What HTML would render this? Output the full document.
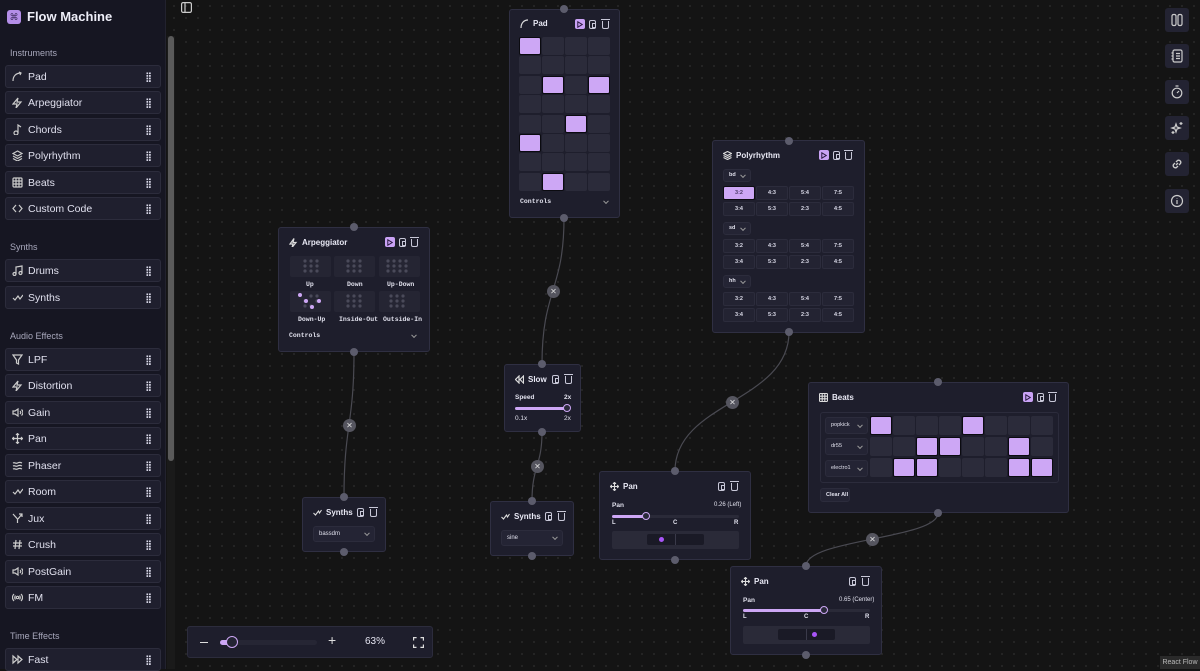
<!DOCTYPE html>
<html><head><meta charset="utf-8"><style>
*{box-sizing:border-box;margin:0;padding:0}
body{width:1200px;height:669px;overflow:hidden;background:#141414;font-family:"Liberation Sans",sans-serif;color:#e4e4f0;position:relative}
#canvas{position:absolute;left:0;top:0;width:1200px;height:669px;background-color:#141414;background-image:radial-gradient(circle,#2a2a2a 0.8px,transparent 1px);background-size:12px 12px}
.sb{position:absolute;left:0;top:0;width:166px;height:669px;background:#161622;border-right:1px solid #22222e}
.scroll{position:absolute;left:167px;top:36px;width:8px;height:633px;background:#1a1a1a}
.scroll i{position:absolute;left:1px;top:0;width:6px;height:425px;background:#5a5a5a;border-radius:3px}
.logo{position:absolute;left:7px;top:10px;width:14px;height:14px;border-radius:3px;background:#b48ee8;color:#3a2a5a;font-size:9px;text-align:center;line-height:14px}
.title{position:absolute;left:27px;top:9px;font-size:13px;font-weight:bold;color:#eeeef8}
.sec{position:absolute;left:10px;font-size:9px;color:#a8a8bc}
.it{position:absolute;left:5px;width:156px;height:23px;background:#1f1f2e;border:1px solid #2c2c3c;border-radius:3px;font-size:10.5px;color:#e0e0ee;line-height:22px;padding-left:22px}
.it svg{position:absolute;left:6px;top:5px}
.it::after{content:"";position:absolute;right:9px;top:6px;width:5px;height:10px;background-image:radial-gradient(circle,#d8d8e8 0.9px,transparent 1.1px);background-size:2.6px 2.6px}
.node{position:absolute;background:#1e1e2c;border:1px solid #2f2f42;border-radius:3px}
.h{position:absolute;width:8px;height:8px;border-radius:50%;background:#5c5c6c}
.nt{position:absolute;font-size:8px;font-weight:bold;color:#e8e8f4;white-space:nowrap}
.nt svg{vertical-align:-2px;margin-right:4px}
.ib{position:absolute;width:10px;height:10px;border-radius:2px}
.play{background:#c9a2f5}
.play svg{position:absolute;left:2px;top:1.5px}
.cp{border:1.2px solid #c8c8d8;border-radius:2px;width:7px;height:9px}
.cp::after{content:"";position:absolute;left:1.5px;top:2px;width:2px;height:3px;border:0.8px solid #c8c8d8}
.tr{border:1.2px solid #c8c8d8;border-top:none;border-radius:0 0 2px 2px;width:7px;height:8px}
.tr::before{content:"";position:absolute;left:-2px;top:-2px;width:9px;height:1.2px;background:#c8c8d8}
.c{position:absolute;background:#2b2b3a;border-radius:2px}
.on{background:#cda7f5;border:1px solid #0b0b10}
.sm{position:absolute;font-size:6.5px;color:#e0e0ec;font-family:"Liberation Mono",monospace;font-weight:bold}
.r{position:absolute;width:22px;height:14px;background:#232332;border:1px solid #2c2c3c;border-radius:2px;font-size:5.5px;font-weight:bold;color:#dcdcea;text-align:center;line-height:12px}
.ra{background:#cda7f5;border-color:#0d0d12;color:#4a3a66}
.sel{position:absolute;background:#242434;border:1px solid #2c2c3c;border-radius:3px;font-size:6px;color:#e0e0ec;padding-left:5px}
.chev{position:absolute;right:5px;top:50%;width:4px;height:4px;border-right:1px solid #999;border-bottom:1px solid #999;transform:translateY(-70%) rotate(45deg)}
.x{position:absolute;width:13px;height:13px;border-radius:50%;background:#55555f;color:#ddd;font-size:8px;text-align:center;line-height:13px}
.rb{position:absolute;left:1165px;width:24px;height:24px;background:#232332;border-radius:3px}
.rb svg{position:absolute;left:5px;top:5px}
</style></head><body>
<div id="canvas"></div>
<svg style="position:absolute;left:0;top:0" width="1200" height="669" fill="none" stroke="#4a4a52" stroke-width="1.2">
<path d="M564 218 C564 290 542 290 542 364"/>
<path d="M354 352 C354 425 344 425 344 497"/>
<path d="M542 432 C542 466 532 466 532 501"/>
<path d="M789 332 C789 402 675 402 675 471"/>
<path d="M938 513 C938 539 806 539 806 566"/>
</svg>
<div class="x" style="left:547px;top:285px">✕</div>
<div class="x" style="left:343px;top:419px">✕</div>
<div class="x" style="left:531px;top:460px">✕</div>
<div class="x" style="left:726px;top:396px">✕</div>
<div class="x" style="left:866px;top:533px">✕</div>

<!-- Sidebar -->
<div class="sb"></div>
<div class="scroll"><i></i></div>
<div class="logo">⌘</div><div class="title">Flow Machine</div>
<svg style="position:absolute;left:181px;top:2px" width="11" height="11" fill="none" stroke="#ccc" stroke-width="1.2"><rect x="0.6" y="0.6" width="9.8" height="9.8" rx="1.5"/><path d="M4 1v9"/></svg>
<div class="sec" style="top:48px">Instruments</div>
<div class="it" style="top:65px"><svg width="11" height="11" fill="none" stroke="#ccc" stroke-width="1.2"><path d="M1 10C1 5 4 2 9 2M7 1l2 1-1 2"/></svg>Pad</div>
<div class="it" style="top:91px"><svg width="11" height="11" fill="none" stroke="#ccc" stroke-width="1.2"><path d="M6 1L1 7h4l-1 4 5-6H5z"/></svg>Arpeggiator</div>
<div class="it" style="top:118px"><svg width="11" height="11" fill="none" stroke="#ccc" stroke-width="1.2"><circle cx="4" cy="9" r="2"/><path d="M6 9V1l3 2"/></svg>Chords</div>
<div class="it" style="top:144px"><svg width="11" height="11" fill="none" stroke="#ccc" stroke-width="1.2"><path d="M5.5 1L10 3.5 5.5 6 1 3.5zM1 6l4.5 2.5L10 6M1 8.5L5.5 11 10 8.5"/></svg>Polyrhythm</div>
<div class="it" style="top:171px"><svg width="11" height="11" fill="none" stroke="#ccc" stroke-width="1.2"><rect x="1" y="1" width="9" height="9" rx="1"/><path d="M4 1v9M7 1v9M1 4h9M1 7h9"/></svg>Beats</div>
<div class="it" style="top:197px"><svg width="11" height="11" fill="none" stroke="#ccc" stroke-width="1.2"><path d="M4 2L1 5.5 4 9M7 2l3 3.5L7 9"/></svg>Custom Code</div>
<div class="sec" style="top:242px">Synths</div>
<div class="it" style="top:259px"><svg width="11" height="11" fill="none" stroke="#ccc" stroke-width="1.2"><circle cx="2.5" cy="9" r="1.5"/><circle cx="8.5" cy="8" r="1.5"/><path d="M4 9V2l6-1v7"/></svg>Drums</div>
<div class="it" style="top:286px"><svg width="11" height="11" fill="none" stroke="#ccc" stroke-width="1.2"><path d="M1 6l2 2 3-4 2 3 3-4"/></svg>Synths</div>
<div class="sec" style="top:331px">Audio Effects</div>
<div class="it" style="top:348px"><svg width="11" height="11" fill="none" stroke="#ccc" stroke-width="1.2"><path d="M1 1h9L6.5 6v4l-2-1V6z"/></svg>LPF</div>
<div class="it" style="top:374px"><svg width="11" height="11" fill="none" stroke="#ccc" stroke-width="1.2"><path d="M6 1L1 7h4l-1 4 5-6H5z"/></svg>Distortion</div>
<div class="it" style="top:401px"><svg width="11" height="11" fill="none" stroke="#ccc" stroke-width="1.2"><path d="M1 4h2l3-2v7L3 7H1zM8 4c1 1 1 2 0 3M9.5 2.5c2 2 2 4 0 6"/></svg>Gain</div>
<div class="it" style="top:427px"><svg width="11" height="11" fill="none" stroke="#ccc" stroke-width="1.2"><path d="M5.5 0.5v10M0.5 5.5h10M4 2l1.5-1.5L7 2M4 9l1.5 1.5L7 9M2 4L0.5 5.5 2 7M9 4l1.5 1.5L9 7"/></svg>Pan</div>
<div class="it" style="top:454px"><svg width="11" height="11" fill="none" stroke="#ccc" stroke-width="1.2"><path d="M1 3c2-1 3 1 4.5 0S8 2 10 3M1 6c2-1 3 1 4.5 0S8 5 10 6M1 9c2-1 3 1 4.5 0S8 8 10 9"/></svg>Phaser</div>
<div class="it" style="top:480px"><svg width="11" height="11" fill="none" stroke="#ccc" stroke-width="1.2"><path d="M1 6l2 2 3-4 2 3 3-4"/></svg>Room</div>
<div class="it" style="top:507px"><svg width="11" height="11" fill="none" stroke="#ccc" stroke-width="1.2"><path d="M5.5 10V6L1 1M6 6l4-5M7 1h3v3"/></svg>Jux</div>
<div class="it" style="top:533px"><svg width="11" height="11" fill="none" stroke="#ccc" stroke-width="1.2"><path d="M4 1L3 10M8 1L7 10M1 4h9M1 7h9"/></svg>Crush</div>
<div class="it" style="top:560px"><svg width="11" height="11" fill="none" stroke="#ccc" stroke-width="1.2"><path d="M1 4h2l3-2v7L3 7H1zM8 4c1 1 1 2 0 3M9.5 2.5c2 2 2 4 0 6"/></svg>PostGain</div>
<div class="it" style="top:586px"><svg width="11" height="11" fill="none" stroke="#ccc" stroke-width="1.2"><circle cx="5.5" cy="5.5" r="1.2"/><path d="M3.5 3.5c-1 1-1 3 0 4M7.5 3.5c1 1 1 3 0 4M2 2c-2 2-2 5 0 7M9 2c2 2 2 5 0 7"/></svg>FM</div>
<div class="sec" style="top:631px">Time Effects</div>
<div class="it" style="top:648px"><svg width="11" height="11" fill="none" stroke="#ccc" stroke-width="1.2"><path d="M1 2l4 3.5L1 9zM6 2l4 3.5L6 9z"/></svg>Fast</div>

<!-- Pad node -->
<div class="node" style="left:509px;top:9px;width:111px;height:209px">
<div class="nt" style="left:10px;top:9px"><svg width="9" height="9" fill="none" stroke="#ddd" stroke-width="1.2"><path d="M1 9C1 4 4 1 8 1"/></svg>Pad</div>
<div class="ib play" style="left:65px;top:9px"><svg width="6" height="7" fill="none" stroke="#2a1a40" stroke-width="1"><path d="M0.8 0.8L5.2 3.5 0.8 6.2z"/></svg></div><div class="ib cp" style="left:79px;top:10px"></div><div class="ib tr" style="left:92px;top:11px"></div>
<div class="sm" style="left:10px;top:188px">Controls</div><div class="chev" style="left:94px;top:192px"></div>
</div>
<div style="position:absolute;left:519px;top:37px;width:91px;height:155px">
<div class="c on" style="left:0;top:0;width:22px;height:18px"></div><div class="c" style="left:23px;top:0;width:22px;height:18px"></div><div class="c" style="left:46px;top:0;width:22px;height:18px"></div><div class="c" style="left:69px;top:0;width:22px;height:18px"></div>
<div class="c" style="left:0;top:19.4px;width:22px;height:18px"></div><div class="c" style="left:23px;top:19.4px;width:22px;height:18px"></div><div class="c" style="left:46px;top:19.4px;width:22px;height:18px"></div><div class="c" style="left:69px;top:19.4px;width:22px;height:18px"></div>
<div class="c" style="left:0;top:38.8px;width:22px;height:18px"></div><div class="c on" style="left:23px;top:38.8px;width:22px;height:18px"></div><div class="c" style="left:46px;top:38.8px;width:22px;height:18px"></div><div class="c on" style="left:69px;top:38.8px;width:22px;height:18px"></div>
<div class="c" style="left:0;top:58.2px;width:22px;height:18px"></div><div class="c" style="left:23px;top:58.2px;width:22px;height:18px"></div><div class="c" style="left:46px;top:58.2px;width:22px;height:18px"></div><div class="c" style="left:69px;top:58.2px;width:22px;height:18px"></div>
<div class="c" style="left:0;top:77.6px;width:22px;height:18px"></div><div class="c" style="left:23px;top:77.6px;width:22px;height:18px"></div><div class="c on" style="left:46px;top:77.6px;width:22px;height:18px"></div><div class="c" style="left:69px;top:77.6px;width:22px;height:18px"></div>
<div class="c on" style="left:0;top:97px;width:22px;height:18px"></div><div class="c" style="left:23px;top:97px;width:22px;height:18px"></div><div class="c" style="left:46px;top:97px;width:22px;height:18px"></div><div class="c" style="left:69px;top:97px;width:22px;height:18px"></div>
<div class="c" style="left:0;top:116.4px;width:22px;height:18px"></div><div class="c" style="left:23px;top:116.4px;width:22px;height:18px"></div><div class="c" style="left:46px;top:116.4px;width:22px;height:18px"></div><div class="c" style="left:69px;top:116.4px;width:22px;height:18px"></div>
<div class="c" style="left:0;top:135.8px;width:22px;height:18px"></div><div class="c on" style="left:23px;top:135.8px;width:22px;height:18px"></div><div class="c" style="left:46px;top:135.8px;width:22px;height:18px"></div><div class="c" style="left:69px;top:135.8px;width:22px;height:18px"></div>
</div>
<div class="h" style="left:560px;top:5px"></div><div class="h" style="left:560px;top:214px"></div>

<!-- Arpeggiator -->
<div class="node" style="left:278px;top:227px;width:152px;height:125px">
<div class="nt" style="left:10px;top:10px"><svg width="9" height="9" fill="none" stroke="#ddd" stroke-width="1.2"><path d="M5 0.5L1 6h3l-1 3.5 4-5H4z"/></svg>Arpeggiator</div>
<div class="ib play" style="left:106px;top:9px"><svg width="6" height="7" fill="none" stroke="#2a1a40" stroke-width="1"><path d="M0.8 0.8L5.2 3.5 0.8 6.2z"/></svg></div><div class="ib cp" style="left:120px;top:10px"></div><div class="ib tr" style="left:132px;top:11px"></div>
<div class="c" style="left:11px;top:28px;width:41px;height:21px;background:#252533"></div>
<div class="c" style="left:55px;top:28px;width:41px;height:21px;background:#252533"></div>
<div class="c" style="left:100px;top:28px;width:41px;height:21px;background:#252533"></div>
<div class="c" style="left:11px;top:63px;width:41px;height:21px;background:#252533"></div>
<div class="c" style="left:55px;top:63px;width:41px;height:21px;background:#252533"></div>
<div class="c" style="left:100px;top:63px;width:41px;height:21px;background:#252533"></div>
<div class="sm" style="left:27px;top:53px">Up</div><div class="sm" style="left:68px;top:53px">Down</div><div class="sm" style="left:108px;top:53px">Up-Down</div>
<div class="sm" style="left:19px;top:88px">Down-Up</div><div class="sm" style="left:60px;top:88px">Inside-Out</div><div class="sm" style="left:104px;top:88px">Outside-In</div>
<div class="sm" style="left:10px;top:104px">Controls</div><div class="chev" style="left:133px;top:108px"></div>
</div>
<svg style="position:absolute;left:278px;top:227px" width="152" height="100">
<g fill="#4a4a5a"><circle cx="27" cy="34" r="1.6"/><circle cx="33" cy="34" r="1.6"/><circle cx="39" cy="34" r="1.6"/><circle cx="27" cy="39" r="1.6"/><circle cx="33" cy="39" r="1.6"/><circle cx="39" cy="39" r="1.6"/><circle cx="27" cy="44" r="1.6"/><circle cx="33" cy="44" r="1.6"/><circle cx="39" cy="44" r="1.6"/>
<circle cx="70" cy="34" r="1.6"/><circle cx="76" cy="34" r="1.6"/><circle cx="82" cy="34" r="1.6"/><circle cx="70" cy="39" r="1.6"/><circle cx="76" cy="39" r="1.6"/><circle cx="82" cy="39" r="1.6"/><circle cx="70" cy="44" r="1.6"/><circle cx="76" cy="44" r="1.6"/><circle cx="82" cy="44" r="1.6"/>
<circle cx="110" cy="34" r="1.6"/><circle cx="116" cy="34" r="1.6"/><circle cx="122" cy="34" r="1.6"/><circle cx="128" cy="34" r="1.6"/><circle cx="110" cy="39" r="1.6"/><circle cx="116" cy="39" r="1.6"/><circle cx="122" cy="39" r="1.6"/><circle cx="128" cy="39" r="1.6"/><circle cx="110" cy="44" r="1.6"/><circle cx="116" cy="44" r="1.6"/><circle cx="122" cy="44" r="1.6"/><circle cx="128" cy="44" r="1.6"/>
<circle cx="70" cy="69" r="1.6"/><circle cx="76" cy="69" r="1.6"/><circle cx="82" cy="69" r="1.6"/><circle cx="70" cy="74" r="1.6"/><circle cx="76" cy="74" r="1.6"/><circle cx="82" cy="74" r="1.6"/><circle cx="70" cy="79" r="1.6"/><circle cx="76" cy="79" r="1.6"/><circle cx="82" cy="79" r="1.6"/>
<circle cx="113" cy="69" r="1.6"/><circle cx="119" cy="69" r="1.6"/><circle cx="125" cy="69" r="1.6"/><circle cx="113" cy="74" r="1.6"/><circle cx="119" cy="74" r="1.6"/><circle cx="125" cy="74" r="1.6"/><circle cx="113" cy="79" r="1.6"/><circle cx="119" cy="79" r="1.6"/><circle cx="125" cy="79" r="1.6"/>
<circle cx="27" cy="74" r="1.6"/><circle cx="39" cy="74" r="1.6"/><circle cx="27" cy="79" r="1.6"/><circle cx="33" cy="79" r="1.6"/><circle cx="39" cy="69" r="1.6"/><circle cx="33" cy="69" r="1.6"/></g>
<g fill="#cda7f5"><circle cx="22" cy="68" r="2"/><circle cx="28" cy="74" r="2"/><circle cx="34" cy="80" r="2"/><circle cx="41" cy="74" r="2"/></g>
</svg>
<div class="h" style="left:350px;top:223px"></div><div class="h" style="left:350px;top:348px"></div>

<!-- Slow -->
<div class="node" style="left:504px;top:364px;width:77px;height:68px">
<div class="nt" style="left:10px;top:10px"><svg width="9" height="9" fill="none" stroke="#ddd" stroke-width="1.2"><path d="M4 1L0.5 4.5 4 8zM8.5 1L5 4.5 8.5 8z"/></svg>Slow</div>
<div class="ib cp" style="left:47px;top:10px"></div><div class="ib tr" style="left:60px;top:11px"></div>
<div class="sm" style="left:10px;top:29px;font-family:'Liberation Sans';font-size:6.5px">Speed</div><div class="sm" style="left:59px;top:29px;font-family:'Liberation Sans'">2x</div>
<div style="position:absolute;left:10px;top:42px;width:52px;height:3px;background:#cda7f5;border-radius:2px"></div>
<div style="position:absolute;left:58px;top:39px;width:8px;height:8px;border-radius:50%;background:#2a2a3a;border:1.5px solid #cda7f5"></div>
<div class="sm" style="left:10px;top:50px;font-family:'Liberation Sans';font-weight:normal">0.1x</div><div class="sm" style="left:59px;top:50px;font-family:'Liberation Sans';font-weight:normal">2x</div>
</div>
<div class="h" style="left:538px;top:360px"></div><div class="h" style="left:538px;top:428px"></div>

<!-- Synths1 -->
<div class="node" style="left:302px;top:497px;width:84px;height:55px">
<div class="nt" style="left:10px;top:10px"><svg width="9" height="9" fill="none" stroke="#ddd" stroke-width="1.1"><path d="M0.5 5l2 2 3-4 1 2 2-3"/></svg>Synths</div>
<div class="ib cp" style="left:54px;top:10px"></div><div class="ib tr" style="left:67px;top:11px"></div>
<div class="sel" style="left:10px;top:28px;width:62px;height:16px;line-height:14px">bassdm<span class="chev"></span></div>
</div>
<div class="h" style="left:340px;top:493px"></div><div class="h" style="left:340px;top:548px"></div>

<!-- Synths2 -->
<div class="node" style="left:490px;top:501px;width:84px;height:55px">
<div class="nt" style="left:10px;top:10px"><svg width="9" height="9" fill="none" stroke="#ddd" stroke-width="1.1"><path d="M0.5 5l2 2 3-4 1 2 2-3"/></svg>Synths</div>
<div class="ib cp" style="left:54px;top:10px"></div><div class="ib tr" style="left:67px;top:11px"></div>
<div class="sel" style="left:10px;top:28px;width:62px;height:16px;line-height:14px">sine<span class="chev"></span></div>
</div>
<div class="h" style="left:528px;top:497px"></div><div class="h" style="left:528px;top:552px"></div>

<!-- Polyrhythm -->
<div class="node" style="left:712px;top:140px;width:153px;height:193px">
<div class="nt" style="left:10px;top:10px"><svg width="9" height="9" fill="none" stroke="#ddd" stroke-width="1.1"><path d="M4.5 0.5L8.5 2.5 4.5 4.5 0.5 2.5zM0.5 4.5l4 2 4-2M0.5 6.5l4 2 4-2"/></svg>Polyrhythm</div>
<div class="ib play" style="left:106px;top:9px"><svg width="6" height="7" fill="none" stroke="#2a1a40" stroke-width="1"><path d="M0.8 0.8L5.2 3.5 0.8 6.2z"/></svg></div><div class="ib cp" style="left:120px;top:10px"></div><div class="ib tr" style="left:132px;top:11px"></div>
<div class="sel" style="left:10px;top:28px;width:28px;height:13px;line-height:11px;font-size:5.5px;font-weight:bold">bd<span class="chev"></span></div>
<div class="sel" style="left:10px;top:81px;width:28px;height:13px;line-height:11px;font-size:5.5px;font-weight:bold">sd<span class="chev"></span></div>
<div class="sel" style="left:10px;top:134px;width:28px;height:13px;line-height:11px;font-size:5.5px;font-weight:bold">hh<span class="chev"></span></div>
</div>
<div style="position:absolute;left:723px;top:186px">
<div class="r ra" style="left:0;top:0;width:32px">3:2</div><div class="r" style="left:33px;top:0;width:32px">4:3</div><div class="r" style="left:66px;top:0;width:32px">5:4</div><div class="r" style="left:99px;top:0;width:32px">7:5</div>
<div class="r" style="left:0;top:16px;width:32px">3:4</div><div class="r" style="left:33px;top:16px;width:32px">5:3</div><div class="r" style="left:66px;top:16px;width:32px">2:3</div><div class="r" style="left:99px;top:16px;width:32px">4:5</div>
<div class="r" style="left:0;top:53px;width:32px">3:2</div><div class="r" style="left:33px;top:53px;width:32px">4:3</div><div class="r" style="left:66px;top:53px;width:32px">5:4</div><div class="r" style="left:99px;top:53px;width:32px">7:5</div>
<div class="r" style="left:0;top:69px;width:32px">3:4</div><div class="r" style="left:33px;top:69px;width:32px">5:3</div><div class="r" style="left:66px;top:69px;width:32px">2:3</div><div class="r" style="left:99px;top:69px;width:32px">4:5</div>
<div class="r" style="left:0;top:106px;width:32px">3:2</div><div class="r" style="left:33px;top:106px;width:32px">4:3</div><div class="r" style="left:66px;top:106px;width:32px">5:4</div><div class="r" style="left:99px;top:106px;width:32px">7:5</div>
<div class="r" style="left:0;top:122px;width:32px">3:4</div><div class="r" style="left:33px;top:122px;width:32px">5:3</div><div class="r" style="left:66px;top:122px;width:32px">2:3</div><div class="r" style="left:99px;top:122px;width:32px">4:5</div>
</div>
<div class="h" style="left:785px;top:137px"></div><div class="h" style="left:785px;top:328px"></div>

<!-- Beats -->
<div class="node" style="left:808px;top:382px;width:261px;height:131px">
<div class="nt" style="left:10px;top:10px"><svg width="9" height="9" fill="none" stroke="#ddd" stroke-width="1.1"><rect x="0.5" y="0.5" width="8" height="8" rx="1"/><path d="M3.2 0.5v8M5.8 0.5v8M0.5 3.2h8M0.5 5.8h8"/></svg>Beats</div>
<div class="ib play" style="left:214px;top:9px"><svg width="6" height="7" fill="none" stroke="#2a1a40" stroke-width="1"><path d="M0.8 0.8L5.2 3.5 0.8 6.2z"/></svg></div><div class="ib cp" style="left:228px;top:10px"></div><div class="ib tr" style="left:240px;top:11px"></div>
<div style="position:absolute;left:11px;top:29px;width:239px;height:71px;border:1px solid #2c2c3c;border-radius:3px"></div>
<div class="sel" style="left:16px;top:34px;width:43px;height:17px;line-height:15px;font-size:5.5px">popkick<span class="chev"></span></div>
<div class="sel" style="left:16px;top:55px;width:43px;height:17px;line-height:15px;font-size:5.5px">dr55<span class="chev"></span></div>
<div class="sel" style="left:16px;top:77px;width:43px;height:17px;line-height:15px;font-size:5.5px">electro1<span class="chev"></span></div>
<div class="sel" style="left:11px;top:105px;width:30px;height:14px;line-height:12px;font-size:5.5px;font-weight:bold">Clear All</div>
</div>
<div style="position:absolute;left:870px;top:416px">
<div class="c on" style="left:0;top:0;width:22px;height:19px"></div><div class="c" style="left:23px;top:0;width:22px;height:19px"></div><div class="c" style="left:46px;top:0;width:22px;height:19px"></div><div class="c" style="left:69px;top:0;width:22px;height:19px"></div><div class="c on" style="left:92px;top:0;width:22px;height:19px"></div><div class="c" style="left:115px;top:0;width:22px;height:19px"></div><div class="c" style="left:138px;top:0;width:22px;height:19px"></div><div class="c" style="left:161px;top:0;width:22px;height:19px"></div>
<div class="c" style="left:0;top:21px;width:22px;height:19px"></div><div class="c" style="left:23px;top:21px;width:22px;height:19px"></div><div class="c on" style="left:46px;top:21px;width:22px;height:19px"></div><div class="c on" style="left:69px;top:21px;width:22px;height:19px"></div><div class="c" style="left:92px;top:21px;width:22px;height:19px"></div><div class="c" style="left:115px;top:21px;width:22px;height:19px"></div><div class="c on" style="left:138px;top:21px;width:22px;height:19px"></div><div class="c" style="left:161px;top:21px;width:22px;height:19px"></div>
<div class="c" style="left:0;top:42px;width:22px;height:19px"></div><div class="c on" style="left:23px;top:42px;width:22px;height:19px"></div><div class="c on" style="left:46px;top:42px;width:22px;height:19px"></div><div class="c" style="left:69px;top:42px;width:22px;height:19px"></div><div class="c" style="left:92px;top:42px;width:22px;height:19px"></div><div class="c" style="left:115px;top:42px;width:22px;height:19px"></div><div class="c on" style="left:138px;top:42px;width:22px;height:19px"></div><div class="c on" style="left:161px;top:42px;width:22px;height:19px"></div>
</div>
<div class="h" style="left:934px;top:378px"></div><div class="h" style="left:934px;top:509px"></div>

<!-- Pan1 -->
<div class="node" style="left:599px;top:471px;width:152px;height:89px">
<div class="nt" style="left:10px;top:10px"><svg width="9" height="9" fill="none" stroke="#ddd" stroke-width="1.1"><path d="M4.5 0.5v8M0.5 4.5h8M3 1.8l1.5-1.3L6 1.8M3 7.2l1.5 1.3L6 7.2M1.8 3L0.5 4.5 1.8 6M7.2 3l1.3 1.5L7.2 6"/></svg>Pan</div>
<div class="ib cp" style="left:118px;top:10px"></div><div class="ib tr" style="left:131px;top:11px"></div>
<div class="sm" style="left:12px;top:30px;font-family:'Liberation Sans';font-size:6.5px">Pan</div><div class="sm" style="left:114px;top:30px;font-family:'Liberation Sans';font-weight:normal;font-size:6px">0.26 (Left)</div>
<div style="position:absolute;left:12px;top:43px;width:127px;height:3px;background:#2a2a38;border-radius:2px"></div>
<div style="position:absolute;left:12px;top:43px;width:34px;height:3px;background:#cda7f5;border-radius:2px"></div>
<div style="position:absolute;left:42px;top:40px;width:8px;height:8px;border-radius:50%;background:#2a2a3a;border:1.5px solid #cda7f5"></div>
<div class="sm" style="left:12px;top:48px;font-family:'Liberation Sans';font-size:6px">L</div><div class="sm" style="left:73px;top:48px;font-family:'Liberation Sans';font-size:6px">C</div><div class="sm" style="left:134px;top:48px;font-family:'Liberation Sans';font-size:6px">R</div>
<div style="position:absolute;left:12px;top:59px;width:127px;height:18px;background:#2a2a38;border-radius:2px"></div>
<div style="position:absolute;left:47px;top:62px;width:57px;height:11px;background:#1a1a26;border-radius:2px"></div>
<div style="position:absolute;left:75px;top:62px;width:1px;height:11px;background:#3a3a4a"></div>
<div style="position:absolute;left:59px;top:65px;width:5px;height:5px;border-radius:50%;background:#a855f7"></div>
</div>
<div class="h" style="left:671px;top:467px"></div><div class="h" style="left:671px;top:556px"></div>

<!-- Pan2 -->
<div class="node" style="left:730px;top:566px;width:152px;height:89px">
<div class="nt" style="left:10px;top:10px"><svg width="9" height="9" fill="none" stroke="#ddd" stroke-width="1.1"><path d="M4.5 0.5v8M0.5 4.5h8M3 1.8l1.5-1.3L6 1.8M3 7.2l1.5 1.3L6 7.2M1.8 3L0.5 4.5 1.8 6M7.2 3l1.3 1.5L7.2 6"/></svg>Pan</div>
<div class="ib cp" style="left:118px;top:10px"></div><div class="ib tr" style="left:131px;top:11px"></div>
<div class="sm" style="left:12px;top:30px;font-family:'Liberation Sans';font-size:6.5px">Pan</div><div class="sm" style="left:108px;top:30px;font-family:'Liberation Sans';font-weight:normal;font-size:6px">0.65 (Center)</div>
<div style="position:absolute;left:12px;top:42px;width:127px;height:3px;background:#2a2a38;border-radius:2px"></div>
<div style="position:absolute;left:12px;top:42px;width:82px;height:3px;background:#cda7f5;border-radius:2px"></div>
<div style="position:absolute;left:89px;top:39px;width:8px;height:8px;border-radius:50%;background:#2a2a3a;border:1.5px solid #cda7f5"></div>
<div class="sm" style="left:12px;top:47px;font-family:'Liberation Sans';font-size:6px">L</div><div class="sm" style="left:73px;top:47px;font-family:'Liberation Sans';font-size:6px">C</div><div class="sm" style="left:134px;top:47px;font-family:'Liberation Sans';font-size:6px">R</div>
<div style="position:absolute;left:12px;top:59px;width:127px;height:18px;background:#2a2a38;border-radius:2px"></div>
<div style="position:absolute;left:47px;top:62px;width:57px;height:11px;background:#1a1a26;border-radius:2px"></div>
<div style="position:absolute;left:75px;top:62px;width:1px;height:11px;background:#3a3a4a"></div>
<div style="position:absolute;left:81px;top:65px;width:5px;height:5px;border-radius:50%;background:#a855f7"></div>
</div>
<div class="h" style="left:802px;top:562px"></div><div class="h" style="left:802px;top:651px"></div>

<!-- Zoom control -->
<div class="node" style="left:187px;top:626px;width:246px;height:32px;border-color:#2c2c3c">
<div style="position:absolute;left:12px;top:15px;width:8px;height:1.3px;background:#ddd"></div>
<div style="position:absolute;left:32px;top:13px;width:97px;height:5px;background:#262634;border-radius:3px"></div>
<div style="position:absolute;left:32px;top:13px;width:12px;height:5px;background:#cda7f5;border-radius:3px"></div>
<div style="position:absolute;left:38px;top:9px;width:12px;height:12px;border-radius:50%;background:#242434;border:1.5px solid #cda7f5"></div>
<div style="position:absolute;left:140px;top:5px;font-size:14px;color:#ddd">+</div>
<div style="position:absolute;left:177px;top:9px;font-size:10px;color:#e4e4f0">63%</div>
<svg style="position:absolute;left:225px;top:10px" width="11" height="11" fill="none" stroke="#ddd" stroke-width="1.2"><path d="M0.6 3.5V0.6h3M7.5 0.6h2.9v3M10.4 7.5v2.9h-3M3.5 10.4H0.6V7.5"/></svg>
</div>

<!-- Right buttons -->
<div class="rb" style="top:8px"><svg width="14" height="14" fill="none" stroke="#ccc" stroke-width="1.2"><rect x="2" y="1.5" width="4" height="11" rx="1.5"/><rect x="8" y="1.5" width="4" height="11" rx="1.5"/></svg></div>
<div class="rb" style="top:44px"><svg width="14" height="14" fill="none" stroke="#ccc" stroke-width="1.2"><rect x="3" y="1" width="9" height="12" rx="1.5"/><path d="M1.5 4h2M1.5 7h2M1.5 10h2M6 4.5h4M6 7h4M6 9.5h4"/></svg></div>
<div class="rb" style="top:80px"><svg width="14" height="14" fill="none" stroke="#ccc" stroke-width="1.2"><circle cx="7" cy="8" r="4.8"/><path d="M5.5 1h3M7 8l2-2"/></svg></div>
<div class="rb" style="top:116px"><svg width="14" height="14" fill="none" stroke="#ccc" stroke-width="1.2"><path d="M6 3l1 3 3 1-3 1-1 3-1-3-3-1 3-1zM11 1v3M9.5 2.5h3M3 10v3M1.5 11.5h3"/></svg></div>
<div class="rb" style="top:152px"><svg width="14" height="14" fill="none" stroke="#ccc" stroke-width="1.3"><path d="M6 8l2-2M5 6L3.5 7.5a2.2 2.2 0 003 3L8 9M9 8l1.5-1.5a2.2 2.2 0 00-3-3L6 5"/></svg></div>
<div class="rb" style="top:189px"><svg width="14" height="14" fill="none" stroke="#ccc" stroke-width="1.2"><circle cx="7" cy="7" r="5.5"/><path d="M7 6v4M7 4v0.5"/></svg></div>

<div style="position:absolute;left:1160px;top:656px;width:40px;height:13px;background:#2a2a2a;color:#bbb;font-size:7px;line-height:13px;text-align:center">React Flow</div>
</body></html>
